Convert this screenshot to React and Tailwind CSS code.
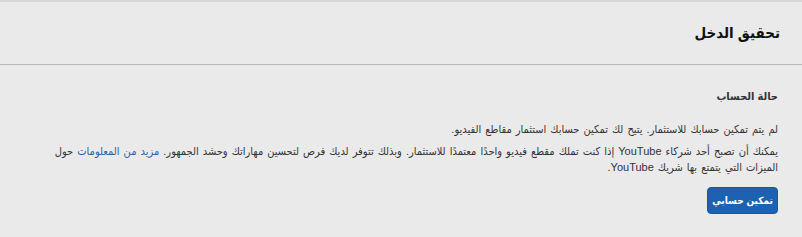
import React from "react";

export default function App() {
  return (
    <div
      dir="rtl"
      className="w-[802px] h-[237px] bg-[#eaeaea] border-t-2 border-[#d6d6d6] text-[#222] overflow-hidden"
      style={{ fontFamily: '"Liberation Sans", "DejaVu Sans Condensed", "DejaVu Sans", sans-serif' }}
    >
      <div className="h-[63px] flex items-center px-[22px] border-b border-[#b9b9b9]">
        <h1 className="text-[15px] font-bold text-[#111]">تحقيق الدخل</h1>
      </div>
      <div className="pr-6 pl-[46px] pt-[23px]">
        <h2 className="text-[11px] font-bold leading-4 text-[#333]">حالة الحساب</h2>
        <p className="mt-[17px] text-[11px] leading-4 text-[#333] [word-spacing:1px]">
          لم يتم تمكين حسابك للاستثمار. يتيح لك تمكين حسابك استثمار مقاطع الفيديو.
        </p>
        <p className="mt-[6px] text-[11px] leading-4 text-[#333] [word-spacing:1px]">
          يمكنك أن تصبح أحد شركاء YouTube إذا كنت تملك مقطع فيديو واحدًا معتمدًا للاستثمار. وبذلك تتوفر لديك فرص لتحسين مهاراتك وحشد الجمهور.{" "}
          <a href="#" className="text-[#2b64a6]">مزيد من المعلومات</a> حول الميزات التي يتمتع بها شريك YouTube.
        </p>
        <div className="mt-[12px]">
          <button className="h-[27px] w-[71px] whitespace-nowrap rounded-sm bg-[#1c62b0] border border-[#17589f] text-white text-[10px] font-bold">
            تمكين حسابي
          </button>
        </div>
      </div>
    </div>
  );
}
